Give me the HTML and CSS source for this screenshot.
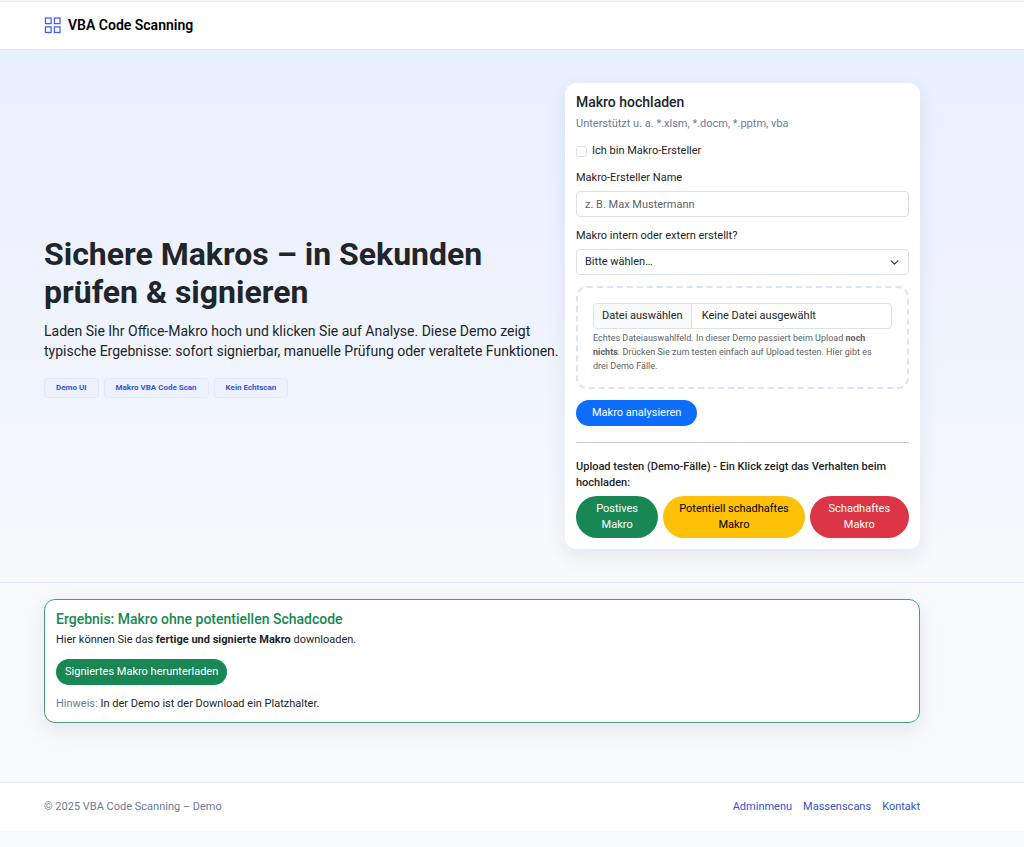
FILE: index.html
```
<!DOCTYPE html>
<html lang="de">
<head>
<meta charset="utf-8">
<meta name="viewport" content="width=device-width, initial-scale=1">
<title>VBA Code Scanning</title>
<link rel="stylesheet" href="styles.css">
</head>
<body>
<header class="topbar">
  <div class="container brand">
    <svg class="brand-icon" viewBox="0 0 17 17" aria-hidden="true">
      <rect x="1.5" y="1" width="5.6" height="5.6"/><rect x="10.4" y="1" width="5.6" height="5.6"/>
      <rect x="1.5" y="9.9" width="5.6" height="5.6"/><rect x="10.4" y="9.9" width="5.6" height="5.6"/>
    </svg>
    <span>VBA Code Scanning</span>
  </div>
</header>

<main>
  <section class="hero">
    <div class="container hero-grid">
      <div class="intro">
        <h1 class="headline">Sichere Makros – in Sekunden prüfen &amp; signieren</h1>
        <p class="lead">Laden Sie Ihr Office-Makro hoch und klicken Sie auf Analyse. Diese Demo zeigt typische Ergebnisse: sofort signierbar, manuelle Prüfung oder veraltete Funktionen.</p>
        <div class="badges">
          <span class="badge">Demo UI</span>
          <span class="badge">Makro VBA Code Scan</span>
          <span class="badge">Kein Echtscan</span>
        </div>
      </div>

      <form class="card upload">
        <h2 class="card-title">Makro hochladen</h2>
        <p class="muted subtitle">Unterstützt u. a. *.xlsm, *.docm, *.pptm, vba</p>
        <div class="check">
          <input class="check-box" type="checkbox" id="creator">
          <label for="creator">Ich bin Makro-Ersteller</label>
        </div>
        <div class="field">
          <label for="name">Makro-Ersteller Name</label>
          <input class="control" type="text" id="name" placeholder="z. B. Max Mustermann">
        </div>
        <div class="field">
          <label for="origin">Makro intern oder extern erstellt?</label>
          <div class="select-wrap">
            <select class="control select" id="origin">
              <option>Bitte wählen…</option>
              <option>Intern</option>
              <option>Extern</option>
            </select>
            <svg class="chevron" viewBox="0 0 16 16" aria-hidden="true"><path d="m2 5 6 6 6-6"/></svg>
          </div>
        </div>
        <div class="dropzone">
          <label class="file">
            <span class="file-button">Datei auswählen</span>
            <span class="file-name">Keine Datei ausgewählt</span>
            <input class="file-input" type="file">
          </label>
          <p class="help">Echtes Dateiauswahlfeld. In dieser Demo passiert beim Upload <strong>noch nichts</strong>. Drücken Sie zum testen einfach auf Upload testen. Hier gibt es drei Demo Fälle.</p>
        </div>
        <button class="btn btn-primary" type="button">Makro analysieren</button>
        <hr class="divider">
        <p class="demo-label">Upload testen (Demo-Fälle) - Ein Klick zeigt das Verhalten beim hochladen:</p>
        <div class="demo-buttons">
          <button class="btn btn-success" type="button">Postives Makro</button>
          <button class="btn btn-warning" type="button">Potentiell schadhaftes Makro</button>
          <button class="btn btn-danger" type="button">Schadhaftes Makro</button>
        </div>
      </form>
    </div>
  </section>

  <section class="container results">
    <div class="card result">
      <h2 class="card-title result-title">Ergebnis: Makro ohne potentiellen Schadcode</h2>
      <p class="result-text">Hier können Sie das <strong>fertige und signierte Makro</strong> downloaden.</p>
      <button class="btn btn-success btn-download" type="button">Signiertes Makro herunterladen</button>
      <p class="result-hint"><span class="muted">Hinweis:</span> In der Demo ist der Download ein Platzhalter.</p>
    </div>
  </section>
</main>

<footer class="footer">
  <div class="container footer-row">
    <span class="muted">© 2025 VBA Code Scanning – Demo</span>
    <nav class="links">
      <a href="#">Adminmenu</a>
      <a href="#">Massenscans</a>
      <a href="#">Kontakt</a>
    </nav>
  </div>
</footer>
</body>
</html>
```
FILE: styles.css
```
* { box-sizing: border-box; }

body {
  margin: 0;
  padding-top: 1px;
  background: #f8f9fd;
  color: #212529;
  font: 400 11px/16px Roboto, "Liberation Sans", sans-serif;
}

h1, h2, p { margin: 0; }
button, input, select { font: inherit; color: inherit; }

.container { padding-left: 44px; padding-right: 104px; }
.muted { color: #6b7a99; }

.topbar {
  background: #fff;
  border-top: 1px solid #e6e7ea;
  border-bottom: 1px solid #e4e8f2;
}
.brand {
  display: flex;
  align-items: center;
  gap: 7px;
  height: 47px;
  padding-bottom: 1px;
  color: #000;
  font-size: 14px;
  font-weight: 600;
}
.brand-icon { width: 17px; height: 17px; fill: none; stroke: #4361ee; stroke-width: 1.3; }

.hero {
  padding: 33px 0;
  background: linear-gradient(180deg, #e8effe 0%, #f1f5fe 65%, #f8f9fc 100%);
  border-bottom: 1px solid #e6e9f8;
}
.hero-grid {
  display: grid;
  grid-template-columns: minmax(0, 518px) minmax(0, 355px);
  justify-content: space-between;
  align-items: center;
}
.headline { font-size: 32px; line-height: 38px; font-weight: 700; }
.lead { margin-top: 10px; font-size: 14px; line-height: 20px; }
.badges { display: flex; gap: 5px; margin-top: 17px; }
.badge {
  padding: 1px 11px;
  border: 1px solid #e0e7ff;
  border-radius: 4px;
  background: #eef2ff;
  color: #3454d1;
  font-size: 8px;
  font-weight: 700;
}

.card {
  background: #fff;
  border-radius: 11px;
  box-shadow: 0 7px 20px rgba(30, 60, 114, 0.09);
}
.card-title { font-size: 14px; line-height: 16px; font-weight: 500; }
.upload { padding: 11px; }
.subtitle { margin-top: 6px; }
.check { display: flex; align-items: center; gap: 5px; margin: 11px 0; }
.check-box {
  appearance: none;
  width: 11px;
  height: 11px;
  margin: 0;
  border: 1px solid #dee2e6;
  border-radius: 3px;
  background: #fff;
}
.check-box:checked { background: #0d6efd; }
.field { display: grid; gap: 5px; margin-bottom: 11px; }
.control {
  width: 100%;
  height: 26px;
  padding: 4px 8px;
  border: 1px solid #dee2e6;
  border-radius: 4px;
  background: #fff;
}
.control::placeholder { color: #5c6268; opacity: 1; }
.select-wrap { display: grid; align-items: center; }
.select { grid-area: 1 / 1; appearance: none; }
.chevron {
  grid-area: 1 / 1;
  justify-self: end;
  width: 9px;
  height: 9px;
  margin-right: 10px;
  fill: none;
  stroke: #343a40;
  stroke-width: 2;
  stroke-linecap: round;
  stroke-linejoin: round;
  pointer-events: none;
}

.dropzone {
  padding: 15px 15px 14px;
  border: 2px dashed #dbe4ff;
  border-radius: 11px;
}
.file {
  position: relative;
  display: flex;
  border: 1px solid #dee2e6;
  border-radius: 4px;
  overflow: hidden;
}
.file-button { padding: 4px 8px; background: #f8f9fa; border-right: 1px solid #dee2e6; }
.file-name { padding: 4px 10px; }
.file-input { position: absolute; inset: 0; width: 100%; opacity: 0; cursor: pointer; }
.help { margin-top: 2px; padding-right: 11px; color: #5c6268; font-size: 9px; line-height: 14px; }
strong { font-weight: 700; }

.btn {
  padding: 5px 16px;
  border: 0;
  border-radius: 21px;
  color: #fff;
  cursor: pointer;
}
.btn-primary { margin-top: 11px; background: #0d6efd; }
.btn-success { background: #198754; }
.btn-warning { background: #ffc107; color: #000; }
.btn-danger { background: #dc3545; }
.divider { margin: 16px 0; border: 0; border-top: 1px solid #c8cacc; }
.demo-label { font-weight: 500; }
.demo-buttons {
  display: grid;
  grid-template-columns: minmax(0, 82fr) minmax(0, 141fr) minmax(0, 99fr);
  gap: 5px;
  margin-top: 5px;
}
.demo-buttons .btn { padding: 5px 11px; }

.results { padding-top: 16px; padding-bottom: 59px; }
.result { padding: 11px 11px 10px; border: 1px solid #4a9f78; }
.result-title { color: #198754; }
.result-text { margin-top: 5px; }
.btn-download { margin: 11px 0; padding: 5px 9px; }

.footer { background: #fff; border-top: 1px solid #e4e8ee; }
.footer-row { display: flex; justify-content: space-between; padding-top: 16px; padding-bottom: 16px; }
.links { display: flex; gap: 11px; }
.links a { color: #3454d1; text-decoration: none; }
```
